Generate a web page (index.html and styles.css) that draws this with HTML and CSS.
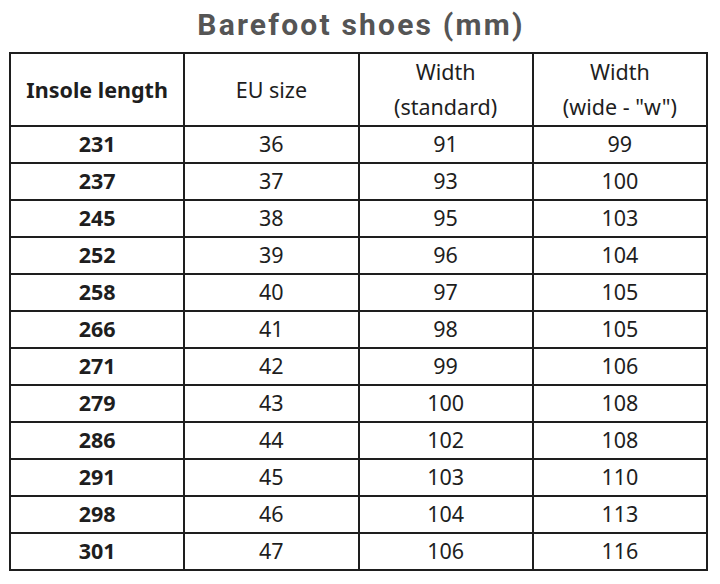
FILE: index.html
```html
<!DOCTYPE html>
<html>
<head>
<meta charset="utf-8">
<link rel="stylesheet" href="styles.css">
</head>
<body>
<h1 class="title">Barefoot shoes (mm)</h1>
<table class="sizes">
  <thead>
    <tr>
      <th class="key">Insole length</th>
      <th>EU size</th>
      <th>Width<br>(standard)</th>
      <th>Width<br>(wide - "w")</th>
    </tr>
  </thead>
  <tbody>
    <tr><td class="key">231</td><td>36</td><td>91</td><td>99</td></tr>
    <tr><td class="key">237</td><td>37</td><td>93</td><td>100</td></tr>
    <tr><td class="key">245</td><td>38</td><td>95</td><td>103</td></tr>
    <tr><td class="key">252</td><td>39</td><td>96</td><td>104</td></tr>
    <tr><td class="key">258</td><td>40</td><td>97</td><td>105</td></tr>
    <tr><td class="key">266</td><td>41</td><td>98</td><td>105</td></tr>
    <tr><td class="key">271</td><td>42</td><td>99</td><td>106</td></tr>
    <tr><td class="key">279</td><td>43</td><td>100</td><td>108</td></tr>
    <tr><td class="key">286</td><td>44</td><td>102</td><td>108</td></tr>
    <tr><td class="key">291</td><td>45</td><td>103</td><td>110</td></tr>
    <tr><td class="key">298</td><td>46</td><td>104</td><td>113</td></tr>
    <tr><td class="key">301</td><td>47</td><td>106</td><td>116</td></tr>
  </tbody>
</table>
</body>
</html>
```
FILE: styles.css
```css
html, body {
  margin: 0;
  padding: 0;
  background: #ffffff;
}
body {
  font-family: "Noto Sans", "Liberation Sans", sans-serif;
  color: #1e1e1e;
}
.title {
  margin: 0;
  height: 52px;
  line-height: 50px;
  text-align: center;
  font-family: Roboto, "Liberation Sans", sans-serif;
  font-weight: 700;
  font-size: 30px;
  letter-spacing: 2.2px;
  color: #555555;
  padding-left: 2px;
}
.sizes {
  margin-left: 9px;
  width: 699px;
  border-collapse: collapse;
  table-layout: fixed;
}
.sizes th, .sizes td {
  border: 2px solid #1e1e1e;
  padding: 0 0 1px 0;
  text-align: center;
  font-size: 21.5px;
  font-weight: 400;
  height: 34px;
  line-height: 34px;
}
.sizes th {
  height: 70px;
  line-height: 35px;
}
.sizes .key {
  font-weight: 700;
}
```
